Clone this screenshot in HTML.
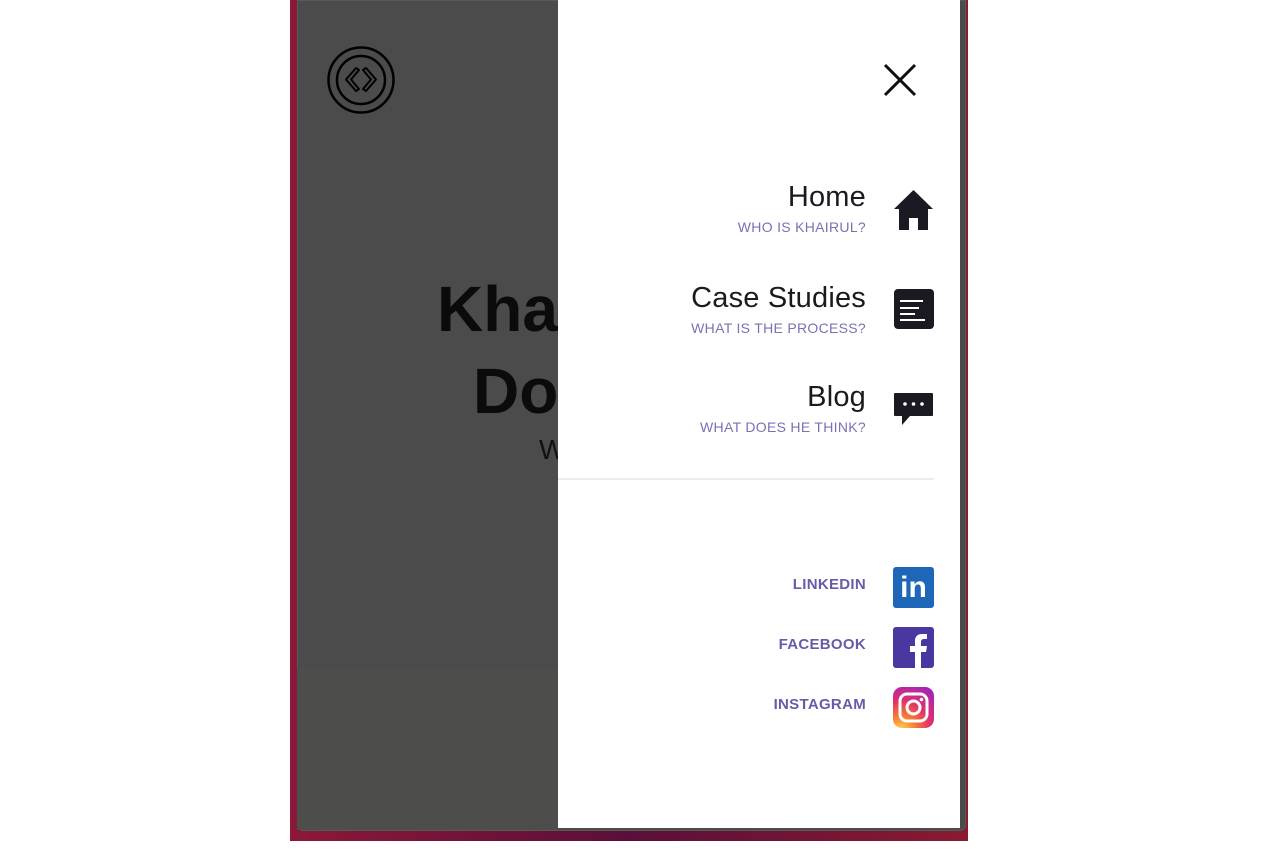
<!DOCTYPE html>
<html><head><meta charset="utf-8"><style>
*{margin:0;padding:0;box-sizing:border-box}
body{width:1280px;height:850px;background:#fff;position:relative;overflow:hidden;font-family:"Liberation Sans",sans-serif}
.frame{position:absolute;left:290px;top:0;width:678px;height:841px;background:linear-gradient(90deg,#8c1838,#5a0f3a 50%,#8a1a30)}
.panel{position:absolute;left:297px;top:0;width:669px;height:831px;background:#4b4b4b;border-radius:0 0 6px 6px;border:1px solid #5a5a55}
.lower{position:absolute;left:297px;top:668px;width:262px;height:162px;background:#4d4d4c}
.drawer{position:absolute;left:558px;top:0;width:402px;height:828px;background:#fff}
.big{position:absolute;font-weight:bold;font-size:64px;color:#0b0b0b}
.item{position:absolute;right:414px;text-align:right}
.item .t{font-size:29px;color:#1a1a1f;line-height:30px;letter-spacing:.2px}
.item .s{font-size:14px;color:#7d6fb6;letter-spacing:.3px;margin-top:7px}
.soc{position:absolute;right:414px;font-weight:bold;font-size:15px;color:#6a5aa8;letter-spacing:.3px}
.ico{position:absolute;left:893px;width:41px;height:41px;border-radius:3px}
</style></head><body>
<div class="frame"></div>
<div class="panel"></div>
<div class="lower"></div>
<svg style="position:absolute;left:327px;top:46px" width="68" height="68" viewBox="0 0 68 68" fill="none" stroke="#000" stroke-width="2.5" stroke-linecap="round" stroke-linejoin="round">
<circle cx="34" cy="34" r="32.5"/><circle cx="34" cy="34" r="24"/>
<path d="M29 22 L19 33.5 L29 45 L32 43 L24 33.5 L32 24 Z" stroke-width="2"/>
<path d="M39 22 L49 33.5 L39 45 L36 43 L44 33.5 L36 24 Z" stroke-width="2"/>
</svg>
<div class="big" style="left:437px;top:272px">Kha</div>
<div class="big" style="left:473px;top:354px">Do</div>
<div style="position:absolute;left:539px;top:434px;font-size:28px;color:#111">W</div>
<div class="drawer"></div>
<svg style="position:absolute;left:882px;top:62px" width="36" height="36" viewBox="0 0 36 36" stroke="#111" stroke-width="3"><path d="M3 3L33 33M33 3L3 33"/></svg>
<div class="item" style="top:182px"><div class="t">Home</div><div class="s">WHO IS KHAIRUL?</div></div>
<div class="item" style="top:283px"><div class="t">Case Studies</div><div class="s">WHAT IS THE PROCESS?</div></div>
<div class="item" style="top:382px"><div class="t">Blog</div><div class="s">WHAT DOES HE THINK?</div></div>
<svg style="position:absolute;left:893px;top:189px" width="41" height="41" viewBox="0 0 41 41" fill="#1b1a22"><path d="M20.5 1L1 20h5v21h10V29h9v12h10V20h5z"/></svg>
<svg style="position:absolute;left:894px;top:289px" width="40" height="40" viewBox="0 0 40 40"><rect width="40" height="40" rx="4" fill="#1b1a22"/><path d="M6 12h23M6 19h19M6 25h15M6 31h25" stroke="#fff" stroke-width="2"/></svg>
<svg style="position:absolute;left:893px;top:392px" width="41" height="34" viewBox="0 0 41 34"><path d="M2 1h37a1 1 0 0 1 1 1v21a1 1 0 0 1-1 1H17l-8 9v-9H2a1 1 0 0 1-1-1V2a1 1 0 0 1 1-1z" fill="#1b1a22"/><circle cx="12" cy="12" r="1.8" fill="#fff"/><circle cx="20.5" cy="12" r="1.8" fill="#fff"/><circle cx="29" cy="12" r="1.8" fill="#fff"/></svg>
<div style="position:absolute;left:558px;top:478px;width:376px;height:2px;background:#ececec"></div>
<div class="soc" style="top:576px">LINKEDIN</div>
<div class="soc" style="top:636px">FACEBOOK</div>
<div class="soc" style="top:696px">INSTAGRAM</div>
<div class="ico" style="top:567px;background:#1e66b8;color:#fff;font-weight:bold;font-size:30px;text-align:center;line-height:42px">in</div>
<svg class="ico" style="top:627px" viewBox="0 0 41 41"><rect width="41" height="41" rx="2" fill="#4a37a0"/><path d="M28 41V25h5l1-6h-6v-4c0-2 1-3 3-3h3V7h-5c-5 0-7 3-7 7v5h-5v6h5v16z" fill="#fff"/></svg>
<svg class="ico" style="top:687px" viewBox="0 0 41 41"><defs><radialGradient id="g" cx="0.2" cy="1.05" r="1.2"><stop offset="0" stop-color="#fdd65a"/><stop offset=".3" stop-color="#f77933"/><stop offset=".6" stop-color="#e1306c"/><stop offset="1" stop-color="#a224b8"/></radialGradient></defs><rect width="41" height="41" rx="9" fill="url(#g)"/><rect x="7" y="7" width="27" height="27" rx="7" fill="none" stroke="#fff" stroke-width="3"/><circle cx="20.5" cy="20.5" r="6.5" fill="none" stroke="#fff" stroke-width="3"/><circle cx="28.5" cy="12.5" r="1.8" fill="#fff"/></svg>
</body></html>
